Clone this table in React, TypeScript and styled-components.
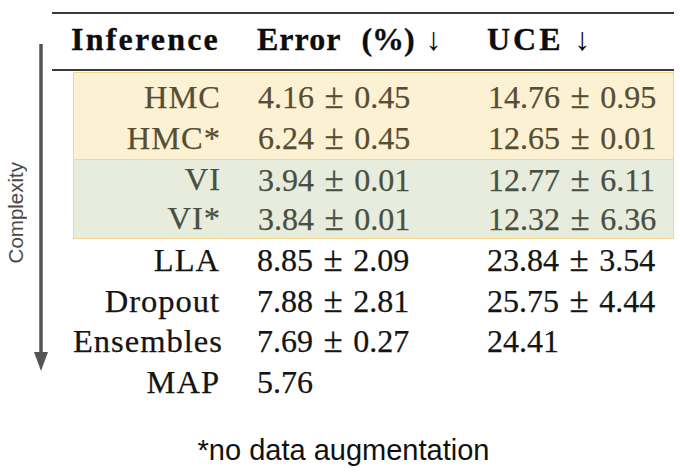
import React from 'react';
import styled, { createGlobalStyle } from 'styled-components';

type Tone = 'yellow' | 'green';
type Pair = [string, string?];

interface Result {
  name: string;
  err: Pair;
  uce?: Pair;
}

const yellowRows: Result[] = [
  { name: 'HMC', err: ['4.16', '0.45'], uce: ['14.76', '0.95'] },
  { name: 'HMC*', err: ['6.24', '0.45'], uce: ['12.65', '0.01'] },
];

const greenRows: Result[] = [
  { name: 'VI', err: ['3.94', '0.01'], uce: ['12.77', '6.11'] },
  { name: 'VI*', err: ['3.84', '0.01'], uce: ['12.32', '6.36'] },
];

const plainRows: Result[] = [
  { name: 'LLA', err: ['8.85', '2.09'], uce: ['23.84', '3.54'] },
  { name: 'Dropout', err: ['7.88', '2.81'], uce: ['25.75', '4.44'] },
  { name: 'Ensembles', err: ['7.69', '0.27'], uce: ['24.41'] },
  { name: 'MAP', err: ['5.76'] },
];

const GlobalStyle = createGlobalStyle`
  html, body {
    margin: 0;
    padding: 0;
    background: #ffffff;
  }
  body {
    width: 680px;
    height: 472px;
    overflow: hidden;
    font-family: "Liberation Serif", "Times New Roman", serif;
  }
`;

const Page = styled.div`
  width: 680px;
  height: 472px;
  padding-top: 12px;
  box-sizing: border-box;
  display: flex;
  flex-direction: column;
`;

const Main = styled.div`
  display: flex;
  align-items: flex-start;
`;

const Side = styled.div`
  width: 52px;
  flex-shrink: 0;
  display: flex;
  align-items: center;
  gap: 7px;
  padding: 32px 0 0 6px;
  box-sizing: border-box;
`;

const AxisLabel = styled.div`
  font-family: "Liberation Sans", Arial, sans-serif;
  font-size: 20.5px;
  line-height: 20px;
  width: 20px;
  color: #4a4a4a;
  writing-mode: vertical-rl;
  transform: rotate(180deg);
  margin-top: 11px;
  white-space: nowrap;
`;

const Table = styled.div`
  width: 622px;
  border-top: 2px solid #3a3a3a;
`;

const HeaderRow = styled.div`
  display: grid;
  grid-template-columns: 168px 193px 1fr;
  column-gap: 37px;
  height: 55px;
  line-height: 50px;
  border-bottom: 2px solid #3a3a3a;
  font-size: 32px;
  font-weight: 700;
  color: #0d0d0d;
  -webkit-text-stroke: 0.3px currentColor;
`;

const HeadCell = styled.div<{ $right?: boolean }>`
  text-align: ${(p) => (p.$right ? 'right' : 'left')};
  white-space: nowrap;
`;

const HeadText = styled.span<{ $ls: number }>`
  letter-spacing: ${(p) => p.$ls}px;
`;

const Down = styled.span`
  font-weight: 400;
  -webkit-text-stroke: 0;
  margin-left: 11px;
`;

const Body = styled.div`
  padding: 1px 0 0 21px;
`;

const Band = styled.div<{ $tone: Tone }>`
  background: ${(p) => (p.$tone === 'yellow' ? '#fdf1d4' : '#e7ecdd')};
  color: ${(p) => (p.$tone === 'yellow' ? '#564d32' : '#485043')};
  border: 1px solid #f3d68c;
  border-top-width: ${(p) => (p.$tone === 'yellow' ? '1px' : '0')};
  padding: ${(p) => (p.$tone === 'yellow' ? '4px 0 1px' : '0')};
`;

const Plain = styled.div`
  color: #141414;
  padding-top: 1px;
`;

const Row = styled.div<{ $h: number }>`
  display: grid;
  grid-template-columns: 147px 193px 1fr;
  column-gap: 37px;
  height: ${(p) => p.$h}px;
  line-height: ${(p) => p.$h}px;
  font-size: 32px;
  white-space: nowrap;
  -webkit-text-stroke: 0.25px currentColor;
`;

const NameCell = styled.div`
  text-align: right;
  font-size: 32.5px;
  letter-spacing: 1px;
`;

const ValueCell = styled.div``;

const Pm = styled.span`
  font-size: 35px;
  margin: 0 10.5px;
`;

const Footnote = styled.div`
  margin-top: 30px;
  padding-left: 7px;
  text-align: center;
  font-family: "Liberation Sans", Arial, sans-serif;
  font-size: 29px;
  line-height: 34px;
  color: #111111;
`;

function Value({ v }: { v?: Pair }) {
  if (!v) return <ValueCell />;
  return (
    <ValueCell>
      {v[0]}
      {v[1] && (
        <>
          <Pm>±</Pm>
          {v[1]}
        </>
      )}
    </ValueCell>
  );
}

function ResultRow({ r, h }: { r: Result; h: number }) {
  return (
    <Row $h={h}>
      <NameCell>{r.name}</NameCell>
      <Value v={r.err} />
      <Value v={r.uce} />
    </Row>
  );
}

function ComplexityArrow() {
  return (
    <svg width="16" height="327" viewBox="0 0 16 327">
      <line x1="8" y1="0" x2="8" y2="310" stroke="#555555" strokeWidth="3.5" />
      <polygon points="1,308 15,308 8,327" fill="#555555" />
    </svg>
  );
}

export default function App() {
  return (
    <>
      <GlobalStyle />
      <Page>
        <Main>
          <Side>
            <AxisLabel>Complexity</AxisLabel>
            <ComplexityArrow />
          </Side>
          <Table>
            <HeaderRow>
              <HeadCell $right>
                <HeadText $ls={2.2}>Inference</HeadText>
              </HeadCell>
              <HeadCell>
                <HeadText $ls={1}>Error</HeadText>
                <HeadText $ls={2}>&nbsp; </HeadText>
                <HeadText $ls={0}>(%)</HeadText>
                <Down>↓</Down>
              </HeadCell>
              <HeadCell>
                <HeadText $ls={3}>UCE</HeadText>
                <Down>↓</Down>
              </HeadCell>
            </HeaderRow>
            <Body>
              <Band $tone="yellow">
                {yellowRows.map((r) => (
                  <ResultRow key={r.name} r={r} h={40.5} />
                ))}
              </Band>
              <Band $tone="green">
                {greenRows.map((r) => (
                  <ResultRow key={r.name} r={r} h={39} />
                ))}
              </Band>
              <Plain>
                {plainRows.map((r) => (
                  <ResultRow key={r.name} r={r} h={40.7} />
                ))}
              </Plain>
            </Body>
          </Table>
        </Main>
        <Footnote>*no data augmentation</Footnote>
      </Page>
    </>
  );
}
